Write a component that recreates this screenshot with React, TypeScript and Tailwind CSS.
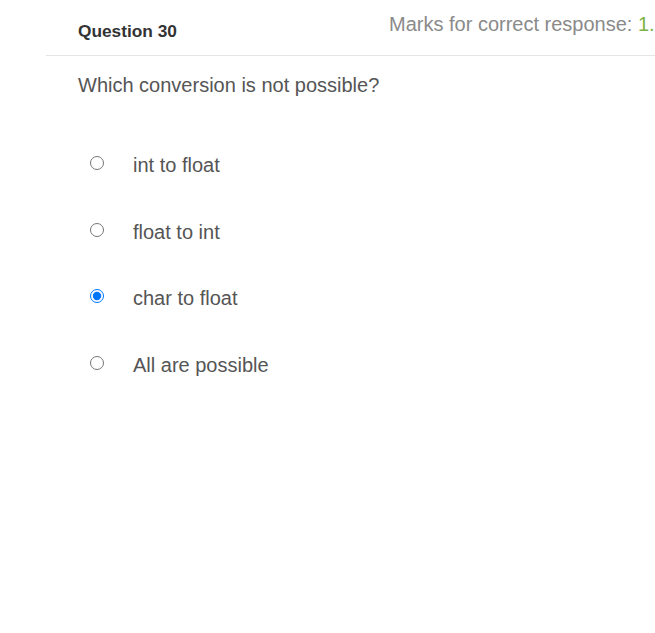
import React from "react";

const options = [
  { id: "a", label: "int to float" },
  { id: "b", label: "float to int" },
  { id: "c", label: "char to float" },
  { id: "d", label: "All are possible" },
];

export default function App() {
  const selected = "c";

  return (
    <div
      className="w-[655px] h-[633px] overflow-hidden bg-white"
      style={{ fontFamily: '"Liberation Sans", Arial, sans-serif' }}
    >
      {/* Question header */}
      <div className="ml-[46px] h-[56px] border-b border-[#e5e5e5] flex items-start whitespace-nowrap">
        <div className="w-[343px] shrink-0 pl-[32px] mt-[19px] text-[17.3px] leading-6 font-bold text-[#333333]">
          Question 30
        </div>
        <div className="shrink-0 mt-[12px] text-[20px] leading-6 text-[#8a8a8a]">
          Marks for correct response: <span className="text-[#7cb342]">1.5</span>
        </div>
      </div>

      {/* Question body */}
      <div className="pl-[78px] mt-[14px] text-[20px] leading-[30px] text-[#555555]">
        Which conversion is not possible?
      </div>

      <div className="mt-[50px] flex flex-col">
        {options.map((opt) => (
          <label key={opt.id} className="h-[66.67px] flex items-start pl-[90px]">
            <input
              type="radio"
              name="q30"
              className="mt-[6px] w-[14px] h-[14px] shrink-0"
              checked={selected === opt.id}
              readOnly
            />
            <span className="ml-[29px] text-[20px] leading-[30px] text-[#555555]">
              {opt.label}
            </span>
          </label>
        ))}
      </div>
    </div>
  );
}
